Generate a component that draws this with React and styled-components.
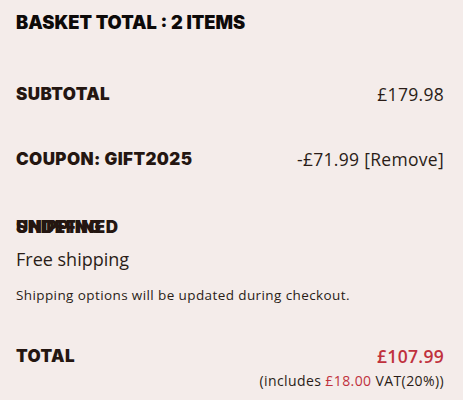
import React from 'react'
import styled, { createGlobalStyle } from 'styled-components'

const GlobalStyle = createGlobalStyle`
  html, body { margin: 0; padding: 0; background: #f4ecea; }
  body { font-family: "Open Sans", Lato, sans-serif; color: #2a1c17; }
`

const Panel = styled.div`
  padding: 10px 19px 8px 16px;
  background: #f4ecea;
`

const Title = styled.h2`
  margin: 0 0 49px;
  font-family: Inter, sans-serif;
  font-weight: 900;
  font-size: 18.3px;
  color: #0d0a09;
  line-height: 24px;
`

const Row = styled.div`
  display: flex;
  justify-content: space-between;
  align-items: flex-start;
  margin-bottom: ${({ gap }) => gap || 0}px;
`

const Label = styled.div`
  font-family: Inter, sans-serif;
  font-weight: 900;
  font-size: 17px;
  letter-spacing: 0.4px;
  line-height: 22px;
  color: #241611;
`

const Value = styled.div`
  font-size: 17.5px;
  letter-spacing: 0.3px;
  line-height: 22px;
  text-align: right;
  color: ${({ accent }) => (accent ? '#c0313d' : '#2a1c17')};
  font-weight: ${({ accent }) => (accent ? 600 : 400)};
`

const Stack = styled.div`
  position: relative;
  display: inline-block;
`

const Overlay = styled(Label)`
  position: absolute;
  left: 0;
  top: 0;
`

const Shipping = styled.div`
  margin: 9px 0 0;
  font-size: 18px;
  line-height: 24px;
  color: #2a1c17;
`

const Note = styled.p`
  margin: 15px 0 41px;
  font-size: 13.5px;
  letter-spacing: 0.4px;
  line-height: 18px;
  color: #2a1c17;
`

const Tax = styled.div`
  margin-top: 5px;
  font-size: 14px;
  letter-spacing: 0.4px;
  line-height: 18px;
  color: #2a1c17;
  text-align: right;
`

const Red = styled.span`
  color: #c0313d;
`

export default function App() {
  return (
    <>
      <GlobalStyle />
      <Panel>
        <Title>BASKET TOTAL : 2 ITEMS</Title>
        <Row gap={43}>
          <Label>SUBTOTAL</Label>
          <Value>£179.98</Value>
        </Row>
        <Row gap={46}>
          <Label>COUPON: GIFT2025</Label>
          <Value>-£71.99 [Remove]</Value>
        </Row>
        <Stack>
          <Label>UNDEFINED</Label>
          <Overlay>SHIPPING</Overlay>
        </Stack>
        <Shipping>Free shipping</Shipping>
        <Note>Shipping options will be updated during checkout.</Note>
        <Row>
          <Label>TOTAL</Label>
          <div>
            <Value accent>£107.99</Value>
            <Tax>
              (includes <Red>£18.00</Red> VAT(20%))
            </Tax>
          </div>
        </Row>
      </Panel>
    </>
  )
}
